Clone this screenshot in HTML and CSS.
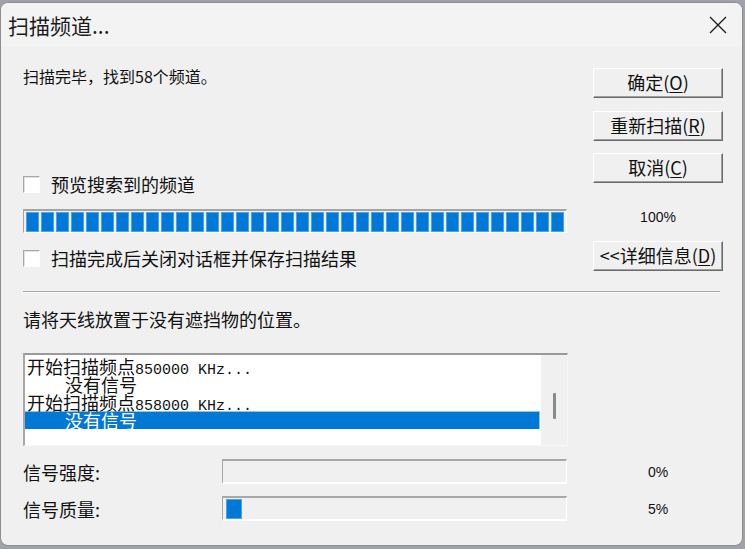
FILE: index.html
```html
<!DOCTYPE html>
<html lang="zh-CN">
<head>
    <meta charset="UTF-8">
    <title>扫描频道</title>
    <link rel="stylesheet" href="styles.css">
</head>
<body>
    <div class="window">
        <div class="titlebar">
            <span class="title">扫描频道...</span>
            <svg class="close" width="18" height="18" viewBox="0 0 18 18">
                <path d="M1 1 L17 17 M17 1 L1 17" stroke="#1b1b1b" stroke-width="1.3" fill="none"/>
            </svg>
        </div>
        <div class="content">
            <div class="top">
                <div class="left">
                    <div class="msg">扫描完毕，找到58个频道。</div>
                    <div class="check first"><span class="box"></span>预览搜索到的频道</div>
                    <div class="progress">
                        <span></span><span></span><span></span><span></span><span></span><span></span>
                        <span></span><span></span><span></span><span></span><span></span><span></span>
                        <span></span><span></span><span></span><span></span><span></span><span></span>
                        <span></span><span></span><span></span><span></span><span></span><span></span>
                        <span></span><span></span><span></span><span></span><span></span><span></span>
                        <span></span><span></span><span></span><span></span><span></span><span></span>
                    </div>
                    <div class="check"><span class="box"></span>扫描完成后关闭对话框并保存扫描结果</div>
                </div>
                <div class="right">
                    <div class="btn">确定(<u>O</u>)</div>
                    <div class="btn">重新扫描(<u>R</u>)</div>
                    <div class="btn">取消(<u>C</u>)</div>
                    <div class="pct total">100%</div>
                    <div class="btn details">&lt;&lt;详细信息(<u>D</u>)</div>
                </div>
            </div>

            <div class="sep"></div>

            <div class="hint">请将天线放置于没有遮挡物的位置。</div>

            <div class="listbox">
                <div class="lines">
                    <div class="line">开始扫描频点<span class="mono">850000 KHz...</span></div>
                    <div class="line sub">没有信号</div>
                    <div class="line">开始扫描频点<span class="mono">858000 KHz...</span></div>
                    <div class="line sub sel">没有信号</div>
                </div>
                <div class="scroll"><span class="thumb"></span></div>
            </div>

            <div class="meter first">
                <span class="label">信号强度:</span>
                <div class="bar"></div>
                <span class="pct">0%</span>
            </div>
            <div class="meter">
                <span class="label">信号质量:</span>
                <div class="bar"><span class="fill"></span></div>
                <span class="pct">5%</span>
            </div>
        </div>
    </div>
</body>
</html>
```

FILE: styles.css
```css
body {
    margin: 0;
    padding: 0;
    background: #9fa1ab;
    font-family: "Noto Sans CJK SC", "Liberation Sans", sans-serif;
    color: #111;
}
.window {
    box-sizing: border-box;
    width: 743px;
    height: 544px;
    margin-top: 2px;
    background: #f0f0f0;
    border: 1px solid #8d8d8d;
    border-radius: 8px;
    overflow: hidden;
}
.titlebar {
    height: 44px;
    background: #f3f3f3;
    display: flex;
    align-items: center;
    justify-content: space-between;
    padding: 0 15px 0 7px;
}
.title {
    font-size: 21px;
    color: #1b1b1b;
    line-height: 24px;
}
.close {
    display: block;
}
.content {
    padding: 21px 0 0 22px;
    font-size: 18px;
}
.top {
    display: flex;
    gap: 26px;
}
.left {
    width: 544px;
}
.right {
    width: 130px;
}
.msg {
    font-size: 16px;
    line-height: 16px;
}
.check {
    display: flex;
    align-items: center;
    height: 18px;
    line-height: 18px;
    margin-top: 16px;
}
.check.first {
    margin-top: 91px;
}
.box {
    box-sizing: border-box;
    width: 17px;
    height: 17px;
    margin-right: 11px;
    background: #fff;
    border: 1px solid;
    border-color: #a8a8a8 #fdfdfd #fdfdfd #a8a8a8;
    box-shadow: inset 1px 1px 0 #e2e2e2;
}
.progress {
    box-sizing: border-box;
    height: 24px;
    margin-top: 16px;
    border-top: 2px solid #a4a4a4;
    border-left: 1px solid #a4a4a4;
    border-right: 1px solid #fff;
    border-bottom: 1px solid #fff;
    padding: 1px 0 0 2px;
    display: flex;
    gap: 2px;
}
.progress span {
    box-sizing: border-box;
    width: 13px;
    height: 20px;
    background: #0078d7;
    border: 1px solid #4ea2e6;
}
.btn {
    box-sizing: border-box;
    height: 30px;
    line-height: 27px;
    text-align: center;
    font-size: 18px;
    border: 1px solid;
    border-color: #fff #6a6a6a #6a6a6a #fff;
    box-shadow: inset -1px -1px 0 #a0a0a0;
    margin-bottom: 12px;
}
.btn:first-child {
    margin-bottom: 13px;
}
.btn u {
    text-underline-offset: 2px;
}
.pct {
    font-family: "Liberation Sans", sans-serif;
    font-size: 14px;
    text-align: center;
    width: 130px;
    line-height: 18px;
}
.total {
    margin-top: 25px;
    margin-bottom: 15px;
}
.details {
    margin-bottom: 0;
}
.sep {
    width: 697px;
    margin-top: 20px;
    border-top: 1px solid #a8a8a8;
    border-bottom: 1px solid #fff;
}
.hint {
    margin-top: 17px;
    line-height: 18px;
}
.listbox {
    box-sizing: border-box;
    width: 545px;
    height: 93px;
    margin-top: 25px;
    background: #fff;
    border-top: 2px solid #9a9a9a;
    border-left: 2px solid #a8a8a8;
    border-right: 1px solid #f7f7f7;
    border-bottom: 1px solid #f7f7f7;
    display: flex;
}
.lines {
    width: 516px;
    padding-top: 2px;
}
.line {
    height: 18px;
    line-height: 18px;
    padding-left: 2px;
    white-space: nowrap;
}
.line.sub {
    padding-left: 40px;
}
.line.sel {
    box-sizing: border-box;
    width: 515px;
    background: #0078d4;
    border-top: 1px solid #8cc4f0;
    border-right: 1px solid #8cc4f0;
    line-height: 16px;
    color: #fff;
}
.mono {
    font-family: "Liberation Mono", monospace;
    font-size: 15px;
}
.scroll {
    flex: 1;
    background: #f0f0f0;
    display: flex;
    justify-content: center;
    padding-top: 38px;
}
.thumb {
    width: 3px;
    height: 26px;
    background: #8a8a8a;
    border-radius: 1px;
}
.meter {
    display: flex;
    align-items: center;
    margin-top: 12px;
}
.meter.first {
    margin-top: 13px;
}
.label {
    width: 199px;
    line-height: 18px;
}
.bar {
    box-sizing: border-box;
    width: 345px;
    height: 25px;
    margin-right: 26px;
    border-top: 2px solid #a8a8a8;
    border-left: 1px solid #a8a8a8;
    border-right: 1px solid #fff;
    border-bottom: 2px solid #fff;
    padding: 1px 0 0 3px;
}
.fill {
    display: block;
    box-sizing: border-box;
    width: 16px;
    height: 20px;
    background: #0078d7;
    border: 1px solid #4ea2e6;
}
```
